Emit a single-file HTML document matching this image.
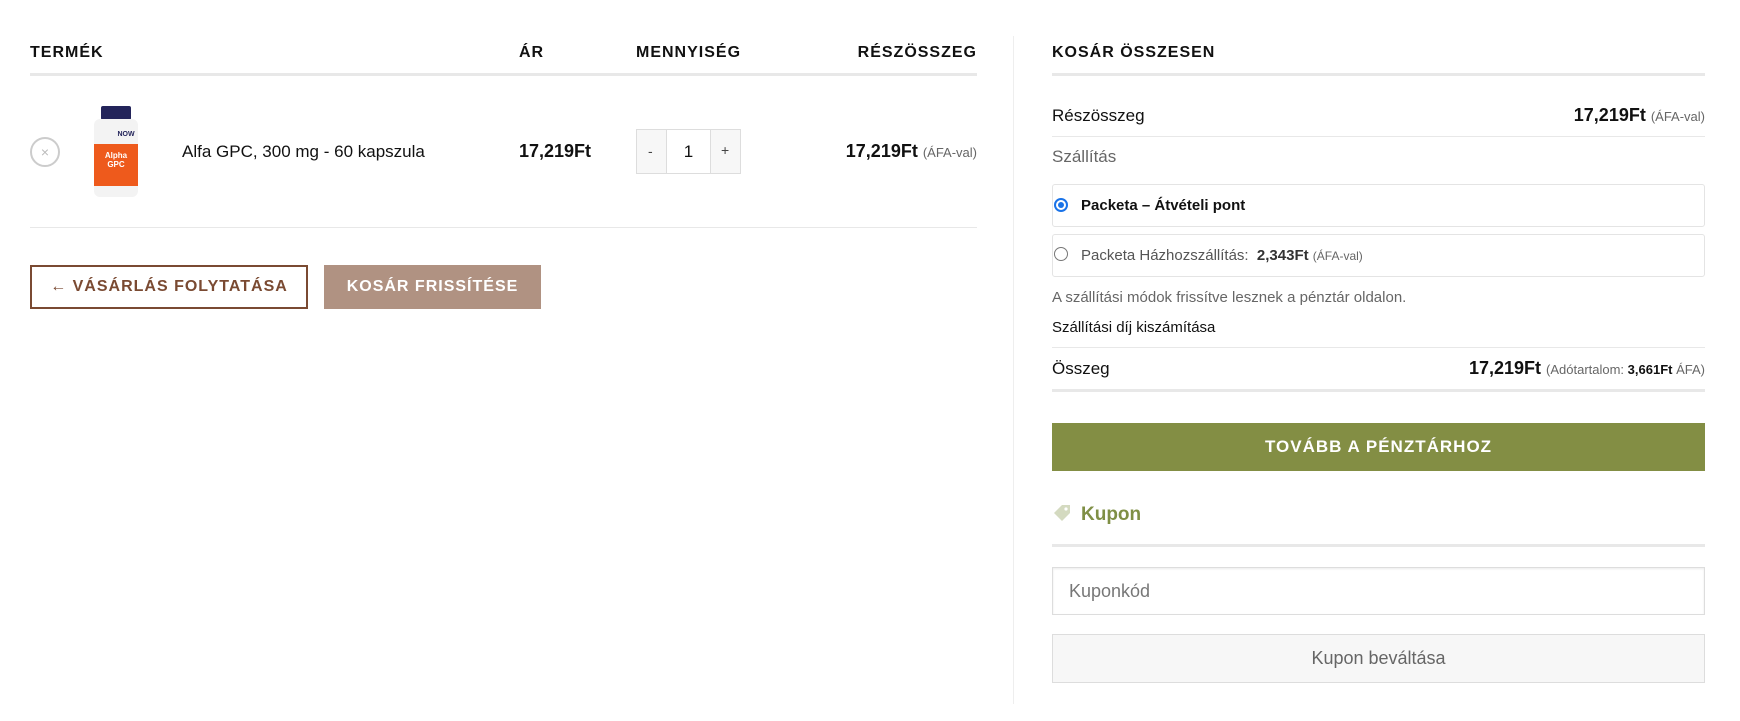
<!DOCTYPE html>
<html><head><meta charset="utf-8"><style>
*{box-sizing:border-box;margin:0;padding:0}
body{width:1740px;height:721px;background:#fff;font-family:"Liberation Sans",sans-serif;color:#111;position:relative;overflow:hidden}
.a{position:absolute;white-space:nowrap}
.h{font-weight:bold;font-size:16px;letter-spacing:1px;color:#111}
.line{position:absolute;background:#e8e8e8}
.small{font-size:13px;color:#666;font-weight:normal}
</style></head><body>
<div class="a h" style="left:30px;top:44px">TERMÉK</div>
<div class="a h" style="left:519px;top:44px">ÁR</div>
<div class="a h" style="left:636px;top:44px">MENNYISÉG</div>
<div class="a h" style="right:763px;top:44px">RÉSZÖSSZEG</div>
<div class="line" style="left:30px;top:73px;width:947px;height:3px"></div>
<div class="a" style="left:30px;top:137px;width:30px;height:30px;border:2px solid #ccc;border-radius:50%;color:#bbb;font-size:14px;text-align:center;line-height:26px">×</div>
<svg class="a" style="left:92px;top:106px" width="50" height="92" viewBox="0 0 50 92">
<rect x="9" y="0" width="30" height="14" rx="2" fill="#23245a"/>
<rect x="2" y="13" width="44" height="78" rx="6" fill="#f3f3f3"/>
<rect x="2" y="38" width="44" height="42" fill="#ee5a1c"/>
<text x="24" y="52" font-size="8" fill="#fff" text-anchor="middle" font-weight="bold" font-family="Liberation Sans">Alpha</text>
<text x="24" y="61" font-size="8" fill="#fff" text-anchor="middle" font-weight="bold" font-family="Liberation Sans">GPC</text>
<text x="34" y="30" font-size="7" fill="#23245a" text-anchor="middle" font-weight="bold" font-family="Liberation Sans">NOW</text>
</svg>
<div class="a" style="left:182px;top:142px;font-size:17px">Alfa GPC, 300 mg - 60 kapszula</div>
<div class="a" style="left:519px;top:141px;font-size:18px;font-weight:bold">17,219Ft</div>
<div class="a" style="left:636px;top:129px;width:105px;height:45px;border:1px solid #ddd;background:#f7f7f7"></div>
<div class="a" style="left:666px;top:130px;width:45px;height:43px;background:#fff;border-left:1px solid #ddd;border-right:1px solid #ddd;text-align:center;line-height:43px;font-size:17px">1</div>
<div class="a" style="left:648px;top:143px;font-size:14px;color:#444">-</div>
<div class="a" style="left:721px;top:142px;font-size:14px;color:#444">+</div>
<div class="a" style="right:763px;top:141px;font-size:18px;font-weight:bold">17,219Ft <span class="small">(ÁFA-val)</span></div>
<div class="line" style="left:30px;top:227px;width:947px;height:1px"></div>
<div class="a" style="left:30px;top:265px;width:278px;height:44px;border:2px solid #7a4a32;color:#7a4a32;font-weight:bold;font-size:16px;letter-spacing:1px;text-align:center;line-height:40px">← VÁSÁRLÁS FOLYTATÁSA</div>
<div class="a" style="left:324px;top:265px;width:217px;height:44px;background:#b09282;color:#fff;font-weight:bold;font-size:16px;letter-spacing:1px;text-align:center;line-height:44px">KOSÁR FRISSÍTÉSE</div>
<div class="line" style="left:1013px;top:36px;width:1px;height:668px;background:#eee"></div>
<div class="a h" style="left:1052px;top:44px">KOSÁR ÖSSZESEN</div>
<div class="line" style="left:1052px;top:73px;width:653px;height:3px"></div>
<div class="a" style="left:1052px;top:106px;font-size:17px">Részösszeg</div>
<div class="a" style="right:35px;top:105px;font-size:18px;font-weight:bold">17,219Ft <span class="small">(ÁFA-val)</span></div>
<div class="line" style="left:1052px;top:136px;width:653px;height:1px"></div>
<div class="a" style="left:1052px;top:147px;font-size:17px;color:#666">Szállítás</div>
<div class="a" style="left:1052px;top:184px;width:653px;height:43px;border:1px solid #e4e4e4;border-radius:3px"></div>
<div class="a" style="left:1054px;top:198px;width:14px;height:14px;border-radius:50%;border:2px solid #1a73e8;background:#fff"><div style="margin:2px;width:6px;height:6px;border-radius:50%;background:#1a73e8"></div></div>
<div class="a" style="left:1081px;top:197px;font-size:15px;font-weight:bold">Packeta – Átvételi pont</div>
<div class="a" style="left:1052px;top:234px;width:653px;height:43px;border:1px solid #e4e4e4;border-radius:3px"></div>
<div class="a" style="left:1054px;top:247px;width:14px;height:14px;border-radius:50%;border:1px solid #777;background:#fff"></div>
<div class="a" style="left:1081px;top:247px;font-size:15px;color:#555">Packeta Házhozszállítás: &nbsp;<b style="color:#333">2,343Ft</b> <span class="small" style="font-size:12px">(ÁFA-val)</span></div>
<div class="a" style="left:1052px;top:289px;font-size:15px;color:#666">A szállítási módok frissítve lesznek a pénztár oldalon.</div>
<div class="a" style="left:1052px;top:319px;font-size:15px">Szállítási díj kiszámítása</div>
<div class="line" style="left:1052px;top:347px;width:653px;height:1px"></div>
<div class="a" style="left:1052px;top:359px;font-size:17px">Összeg</div>
<div class="a" style="right:35px;top:358px;font-size:18px;font-weight:bold">17,219Ft <span class="small">(Adótartalom: <b style="color:#111">3,661Ft</b> ÁFA)</span></div>
<div class="line" style="left:1052px;top:389px;width:653px;height:3px"></div>
<div class="a" style="left:1052px;top:423px;width:653px;height:48px;background:#838e44;color:#fff;font-weight:bold;font-size:17px;letter-spacing:1px;text-align:center;line-height:48px">TOVÁBB A PÉNZTÁRHOZ</div>
<svg class="a" style="left:1052px;top:503px" width="20" height="20" viewBox="0 0 20 20"><path d="M2 10 L10 2 H18 V10 L10 18 Z" fill="#d4dac0"/><circle cx="14" cy="6" r="1.6" fill="#fff"/></svg>
<div class="a" style="left:1081px;top:504px;font-size:19px;font-weight:bold;color:#7f8f45">Kupon</div>
<div class="line" style="left:1052px;top:544px;width:653px;height:3px"></div>
<div class="a" style="left:1052px;top:567px;width:653px;height:48px;border:1px solid #ddd;box-shadow:inset 0 1px 2px rgba(0,0,0,.08);font-size:18px;color:#777;padding-left:16px;line-height:46px">Kuponkód</div>
<div class="a" style="left:1052px;top:634px;width:653px;height:49px;border:1px solid #ddd;background:#f7f7f7;font-size:18px;color:#666;text-align:center;line-height:47px">Kupon beváltása</div>
</body></html>
